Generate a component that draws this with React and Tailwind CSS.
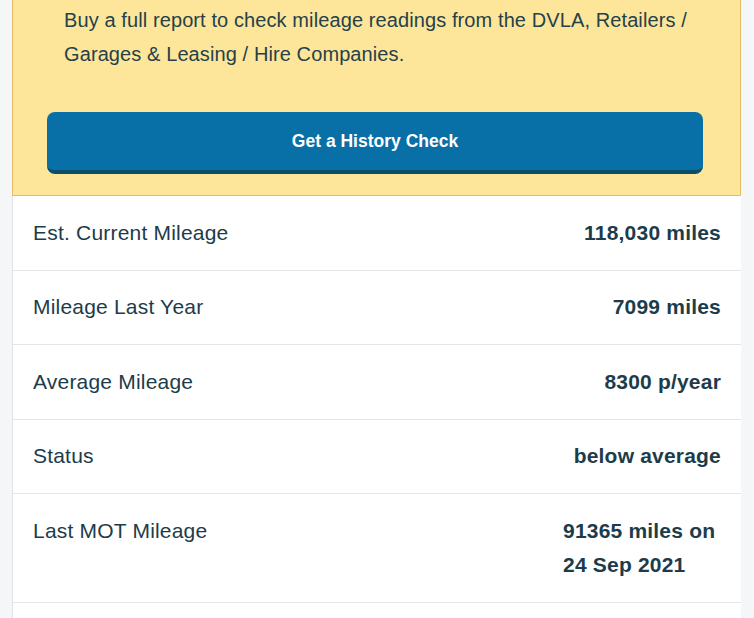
import React from "react"

const rows = [
  { label: "Est. Current Mileage", value: "118,030 miles" },
  { label: "Mileage Last Year", value: "7099 miles" },
  { label: "Average Mileage", value: "8300 p/year" },
  { label: "Status", value: "below average" },
  { label: "Last MOT Mileage", value: "91365 miles on 24 Sep 2021" },
  { label: "", value: "" },
]

const App = () => {
  return (
    <div className="min-h-screen bg-[#f4f6f8] overflow-hidden" style={{ fontFamily: '"Liberation Sans", Arial, sans-serif' }}>
      <div className="ml-[12px] w-[729px]">
        <section className="bg-[#fde69a] border-x border-b border-[#e6bb6a] pt-[3px] pb-[21px] pl-[34px] pr-[37px]">
          <p className="pl-[17px] pr-[10px] text-[20px] leading-[34px] tracking-[0.1px] text-[#25414a]">
            Buy a full report to check mileage readings from the DVLA, Retailers / Garages &amp; Leasing / Hire Companies.
          </p>
          <button className="mt-[41px] w-full h-[62px] rounded-[8px] bg-[#0870a6] border-b-[4px] border-[#0b4e6c] text-white font-bold text-[17.5px]">
            Get a History Check
          </button>
        </section>
        <div className="bg-white border-l border-[#dfe3e7]">
          {rows.map((row, i) => (
            <div key={i} className="flex justify-between items-start gap-4 px-[20px] py-[19.75px] border-b border-[#e3e6e9] text-[21px] leading-[34px] tracking-[0.2px] text-[#1d3c4a]">
              <span>{row.label}</span>
              <span className="font-bold max-w-[158px]">{row.value}</span>
            </div>
          ))}
        </div>
      </div>
    </div>
  )
}

export default App
